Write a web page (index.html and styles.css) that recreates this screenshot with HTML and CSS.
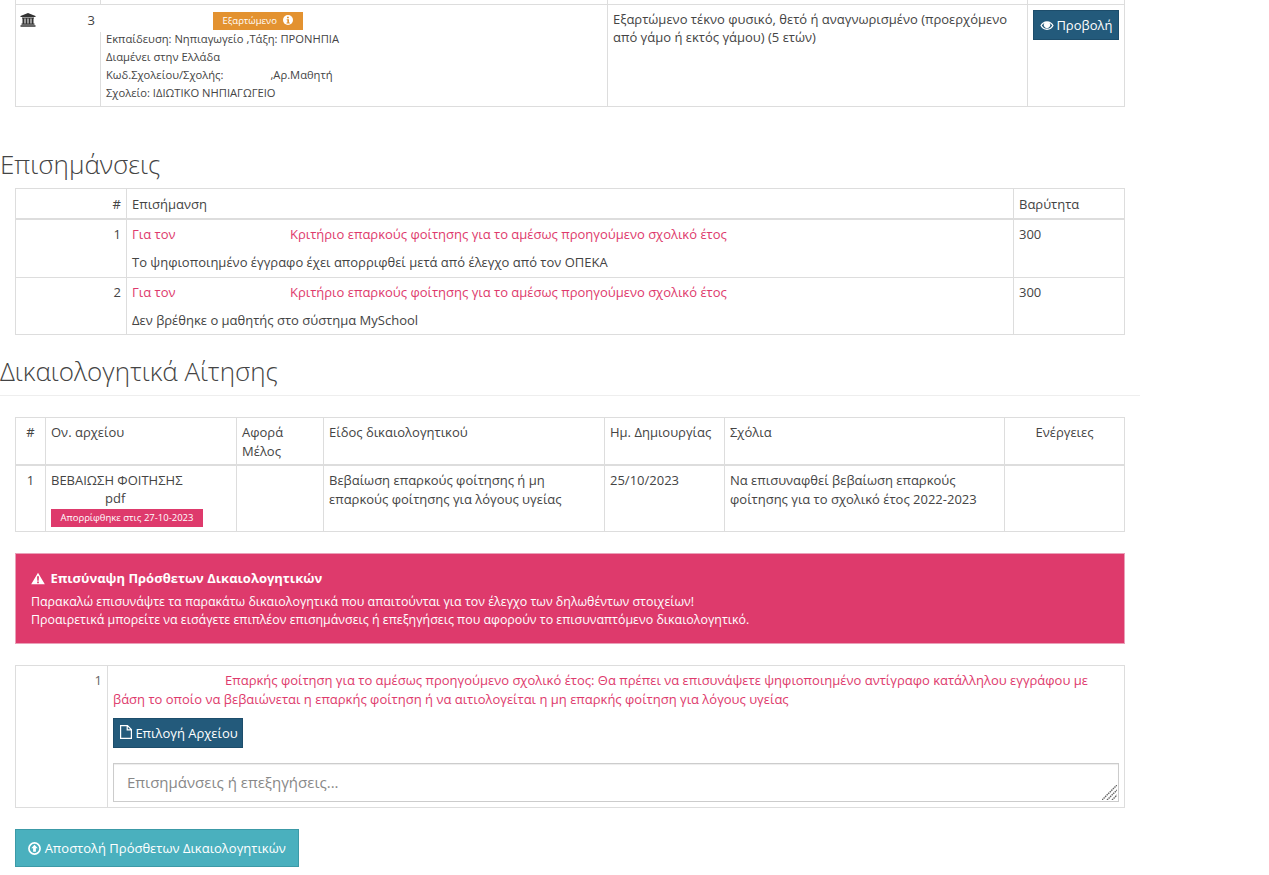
FILE: index.html
```html
<!DOCTYPE html>
<html lang="el">
<head>
<meta charset="utf-8">
<title>Αίτηση</title>
<link rel="stylesheet" href="styles.css">
</head>
<body>
<main class="page">
  <table class="tbl tbl-members">
    <colgroup><col class="m1"><col class="m2"><col class="m3"><col class="m4"></colgroup>
    <tbody>
      <tr class="sliver"><td></td><td></td><td></td><td></td></tr>
      <tr class="member-top">
        <td colspan="2" class="member-head">
          <div class="member-flex">
            <svg class="bank" viewBox="0 0 16 14" width="16" height="14" aria-hidden="true"><path d="M8 0 L15.5 3 V4 H.5 V3 Z M2 4.6 H14 V5.4 H2 Z M2.5 5.6 H4.5 V10.4 H2.5 Z M5.5 5.6 H7.5 V10.4 H5.5 Z M8.5 5.6 H10.5 V10.4 H8.5 Z M11.5 5.6 H13.5 V10.4 H11.5 Z M1.5 10.6 H14.5 V11.8 H1.5 Z M.5 12.2 H15.5 V13.8 H.5 Z" fill="#333"/></svg>
            <span class="member-no">3</span>
            <span class="badge-orange">Εξαρτώμενο
              <svg class="ico-info" viewBox="0 0 12 12" width="10" height="10" aria-hidden="true"><circle cx="6" cy="6" r="6" fill="#fff"/><path d="M4.8 2h2.2v1.8H4.8zM4.4 5h2.8v4h1v1.2H4.2V9h1V6.2h-.8z" fill="#e39230"/></svg>
            </span>
          </div>
        </td>
        <td rowspan="2" class="desc">Εξαρτώμενο τέκνο φυσικό, θετό ή αναγνωρισμένο (προερχόμενο από γάμο ή εκτός γάμου) (5 ετών)</td>
        <td rowspan="2" class="action">
          <a class="btn btn-dark">
            <svg class="eye" viewBox="0 0 16 12" width="14" height="11" aria-hidden="true"><path d="M8 1C4.6 1 1.8 3 .4 6 1.800 9 4.600 11 8 11s6.200-2 7.600-5C14.200 3 11.400 1 8 1zm0 8.800C5.600 9.800 3.400 8.300 2 6c.8-1.300 1.900-2.300 3.200-3A3.600 3.600 0 1 0 10.800 3c1.300.7 2.400 1.700 3.200 3-1.400 2.300-3.600 3.800-6 3.800z" fill="#fff"/></svg>
            Προβολή</a>
        </td>
      </tr>
      <tr class="member-info">
        <td class="no-top"></td>
        <td class="small no-top">
          <div class="small-lines">
            <div>Εκπαίδευση: Νηπιαγωγείο ,Τάξη: ΠΡΟΝΗΠΙΑ</div>
            <div>Διαμένει στην Ελλάδα</div>
            <div>Κωδ.Σχολείου/Σχολής:<span class="gap-school"></span>,Αρ.Μαθητή</div>
            <div>Σχολείο: ΙΔΙΩΤΙΚΟ ΝΗΠΙΑΓΩΓΕΙΟ</div>
          </div>
        </td>
      </tr>
    </tbody>
  </table>

  <h3 class="title title-notes">Επισημάνσεις</h3>
  <table class="tbl tbl-notes">
    <colgroup><col class="n1"><col class="n2"><col class="n3"></colgroup>
    <thead>
      <tr><th class="right">#</th><th>Επισήμανση</th><th>Βαρύτητα</th></tr>
    </thead>
    <tbody>
      <tr>
        <td class="right">1</td>
        <td>
          <div class="pink note-head"><span class="who">Για τον</span>Κριτήριο επαρκούς φοίτησης για το αμέσως προηγούμενο σχολικό έτος</div>
          <div>Το ψηφιοποιημένο έγγραφο έχει απορριφθεί μετά από έλεγχο από τον ΟΠΕΚΑ</div>
        </td>
        <td>300</td>
      </tr>
      <tr>
        <td class="right">2</td>
        <td>
          <div class="pink note-head"><span class="who">Για τον</span>Κριτήριο επαρκούς φοίτησης για το αμέσως προηγούμενο σχολικό έτος</div>
          <div>Δεν βρέθηκε ο μαθητής στο σύστημα MySchool</div>
        </td>
        <td>300</td>
      </tr>
    </tbody>
  </table>

  <div class="title-rule">
    <h3 class="title">Δικαιολογητικά Αίτησης</h3>
  </div>

  <table class="tbl tbl-docs">
    <colgroup><col class="d1"><col class="d2"><col class="d3"><col class="d4"><col class="d5"><col class="d6"><col class="d7"></colgroup>
    <thead>
      <tr><th class="center">#</th><th>Ον. αρχείου</th><th>Αφορά Μέλος</th><th>Είδος δικαιολογητικού</th><th>Ημ. Δημιουργίας</th><th>Σχόλια</th><th class="center">Ενέργειες</th></tr>
    </thead>
    <tbody>
      <tr>
        <td class="center">1</td>
        <td>
          <div>ΒΕΒΑΙΩΣΗ ΦΟΙΤΗΣΗΣ</div>
          <div class="file-ext">pdf</div>
          <div class="badge-pink">Απορρίφθηκε στις 27-10-2023</div>
        </td>
        <td></td>
        <td>Βεβαίωση επαρκούς φοίτησης ή μη επαρκούς φοίτησης για λόγους υγείας</td>
        <td>25/10/2023</td>
        <td>Να επισυναφθεί βεβαίωση επαρκούς φοίτησης για το σχολικό έτος 2022-2023</td>
        <td></td>
      </tr>
    </tbody>
  </table>

  <section class="alert">
    <h4 class="alert-title">
      <svg viewBox="0 0 16 14" width="14" height="13" aria-hidden="true"><path d="M8 .3 15.800 13.700H.2zM6.900 4.500l.3 5h1.600l.3-5zM7 10.400v1.900h2v-1.900z" fill="#fff" fill-rule="evenodd"/></svg>
      Επισύναψη Πρόσθετων Δικαιολογητικών</h4>
    <p>Παρακαλώ επισυνάψτε τα παρακάτω δικαιολογητικά που απαιτούνται για τον έλεγχο των δηλωθέντων στοιχείων!</p>
    <p>Προαιρετικά μπορείτε να εισάγετε επιπλέον επισημάνσεις ή επεξηγήσεις που αφορούν το επισυναπτόμενο δικαιολογητικό.</p>
  </section>

  <table class="tbl tbl-upload">
    <colgroup><col class="u1"><col class="u2"></colgroup>
    <tbody>
      <tr>
        <td class="right upload-no">1</td>
        <td class="upload-cell">
          <div class="pink upload-text"><span class="gap-upload"></span>Επαρκής φοίτηση για το αμέσως προηγούμενο σχολικό έτος: Θα πρέπει να επισυνάψετε ψηφιοποιημένο αντίγραφο κατάλληλου εγγράφου με βάση το οποίο να βεβαιώνεται η επαρκής φοίτηση ή να αιτιολογείται η μη επαρκής φοίτηση για λόγους υγείας</div>
          <a class="btn btn-dark btn-file">
            <svg viewBox="0 0 12 14" width="12" height="14" aria-hidden="true"><path d="M.6.6H7.500L11.400 4.500V13.400H.6ZM7.200.8V4.800H11.200" fill="none" stroke="#fff" stroke-width="1.200"/></svg>
            Επιλογή Αρχείου</a>
          <div class="notes-wrap">
            <textarea class="notes-input" placeholder="Επισημάνσεις ή επεξηγήσεις..."></textarea>
            <svg class="grip" viewBox="0 0 15 15" width="15" height="15" aria-hidden="true"><path d="M0 15 15 0M5 15 15 5M10 15 15 10" stroke="#666" stroke-width="1.400" stroke-dasharray="1.500 .7" fill="none"/></svg>
          </div>
        </td>
      </tr>
    </tbody>
  </table>

  <a class="btn btn-send">
    <svg viewBox="0 0 14 14" width="13" height="13" aria-hidden="true"><circle cx="7" cy="7" r="6" fill="none" stroke="#fff" stroke-width="1.800"/><path d="M7 3 10.500 6.800H8.500V10.500H5.500V6.800H3.500Z" fill="#fff"/></svg>
    Αποστολή Πρόσθετων Δικαιολογητικών</a>
</main>
</body>
</html>
```
FILE: styles.css
```css
* { box-sizing: border-box; }
html, body { margin: 0; padding: 0; background: #fff; }
body {
  font-family: "Open Sans", "Noto Sans", sans-serif;
  font-size: 13px;
  line-height: 18.57px;
  color: #444;
}
.page { width: 1140px; height: 875px; overflow: hidden; }

.tbl {
  border-collapse: collapse;
  table-layout: fixed;
  width: 1109px;
  margin-left: 15px;
  background: #fff;
}
.tbl td, .tbl th {
  border: 1px solid #ddd;
  padding: 5px;
  vertical-align: top;
  text-align: left;
  font-weight: 400;
}
.tbl thead th { border-bottom-width: 2px; }
.tbl .right { text-align: right; }
.tbl .center { text-align: center; }
.pink { color: #de3a6c; }

/* members */
.m1 { width: 85px; } .m2 { width: 507px; } .m3 { width: 420px; } .m4 { width: 97px; }
.tbl .sliver td { height: 4px; padding: 0; border-top: 0; }
.tbl .member-head { padding: 5px 0 0 4px; border-bottom: 0; height: 27px; }
.member-flex { display: flex; align-items: flex-start; height: 22px; }
.bank { flex: none; margin-top: 3px; }
.member-no { width: 59px; flex: none; text-align: right; line-height: 20px; }
.badge-orange {
  margin-left: 118px;
  margin-top: 2px;
  width: 90px;
  height: 18px;
  background: #e39230;
  color: #fff;
  font-size: 9.5px;
  line-height: 18px;
  text-align: center;
  white-space: nowrap;
}
.ico-info { vertical-align: -1px; margin-left: 4px; }
.member-info .no-top { border-top: 0; }
.tbl .small { font-size: 11.2px; line-height: 18px; padding: 0 5px 4px; }
.small-lines { margin-top: -2px; }
.gap-school { display: inline-block; width: 47px; }

/* buttons */
.btn {
  display: inline-block;
  color: #fff;
  white-space: nowrap;
  text-decoration: none;
}
.btn-dark {
  background: #235a7b;
  border: 1px solid #1d4d6b;
  height: 30px;
  line-height: 28px;
  padding: 0 6px;
  font-size: 13px;
}
.btn-dark svg { vertical-align: -1px; }
.btn-dark .eye { margin-right: -1px; }

/* headings */
.title {
  margin: 0;
  font-size: 26px;
  font-weight: 300;
  line-height: 30px;
  color: #444;
}
.title-notes { margin-top: 42px; margin-bottom: 9px; height: 30px; }
.title-rule {
  margin-top: 21px;
  height: 40px;
  border-bottom: 1px solid #eee;
}
.n1 { width: 111px; } .n2 { width: 887px; } .n3 { width: 111px; }
.tbl-notes thead th { padding-top: 6px; }
.tbl-notes tbody td { padding-bottom: 6px; }
.tbl-notes tbody tr:last-child td { padding-bottom: 5px; }
.note-head { margin-bottom: 9px; white-space: nowrap; }
.who { display: inline-block; width: 158px; }

/* documents */
.tbl-docs { margin-top: 21px; }
.d1 { width: 30px; } .d2 { width: 191px; } .d3 { width: 87px; } .d4 { width: 281px; }
.d5 { width: 120px; } .d6 { width: 280px; } .d7 { width: 120px; }
.tbl-docs thead th { padding-bottom: 4px; }
.tbl-docs tbody td { padding-bottom: 4px; }
.file-ext { padding-left: 54px; line-height: 17px; }
.badge-pink {
  width: 152px;
  height: 18px;
  margin: 2px 0 0;
  background: #de3a6c;
  color: #fff;
  font-size: 9.5px;
  line-height: 18px;
  text-align: center;
  white-space: nowrap;
}

/* alert */
.alert {
  margin: 21px 0 0 15px;
  width: 1110px;
  height: 91px;
  padding: 15px;
  background: #de3a6c;
  border: 1px solid #eaa0b8;
  color: #fff;
}
.alert-title {
  margin: 0 0 6px;
  font-size: 13px;
  font-weight: 700;
  line-height: 18px;
}
.alert-title svg { vertical-align: -2px; margin-right: 2px; }
.alert p { margin: 0; line-height: 18px; font-size: 12.42px; }

/* upload */
.tbl-upload { margin-top: 21px; }
.u1 { width: 92px; } .u2 { width: 1017px; }
.upload-no { color: #666; }
.tbl .upload-cell { padding: 5px; height: 142px; }
.upload-text { padding-right: 20px; margin-bottom: 10px; }
.gap-upload { display: inline-block; width: 112px; }
.btn-file { display: block; width: 130px; padding: 0 6px; }
.notes-wrap { position: relative; width: 1006px; margin-top: 15px; }
.notes-input {
  display: block;
  width: 100%;
  height: 39px;
  padding: 6px 13px;
  border: 1px solid #ccc;
  border-radius: 0;
  font-family: "Open Sans", "Noto Sans", sans-serif;
  font-size: 15px;
  line-height: 24px;
  color: #555;
  background: #fff;
  outline: 0;
  resize: none;
  box-shadow: inset 0 1px 1px rgba(0,0,0,.075);
}
.notes-input::placeholder { color: #888; opacity: 1; }
.grip { position: absolute; right: 2px; bottom: 2px; }

.btn-send {
  display: block;
  width: 284px;
  height: 38px;
  margin: 21px 0 0 15px;
  background: #4ab0be;
  border: 1px solid #3c9aa7;
  font-size: 13px;
  line-height: 36px;
  text-align: center;
}
.btn-send svg { vertical-align: -2px; }
```
